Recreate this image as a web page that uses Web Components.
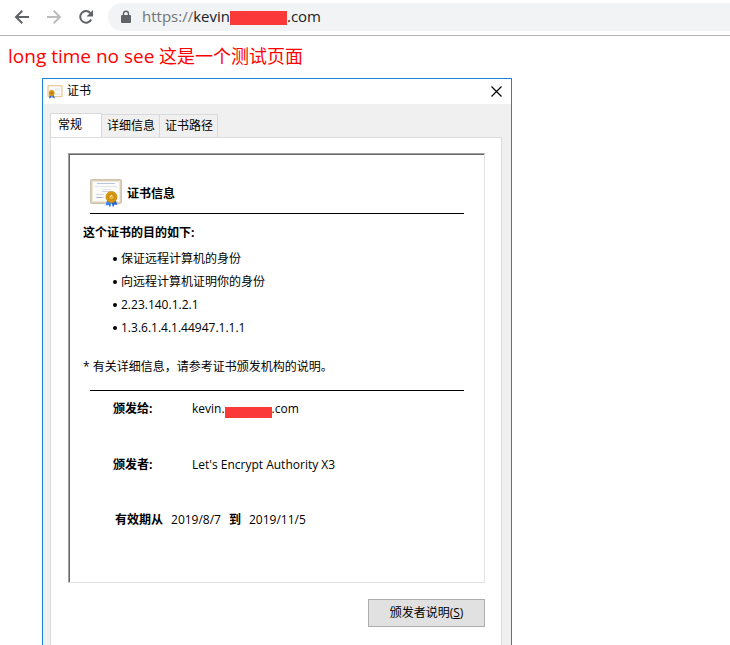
<!DOCTYPE html>
<html lang="zh-CN">
<head>
<meta charset="utf-8">
<title>long time no see</title>
<style>
html, body { margin: 0; height: 100%; background: #fff; }
body { font: 12px/20px "Open Sans", "Noto Sans CJK SC", sans-serif; color: #000; overflow: hidden; }
</style>
</head>
<body>
<browser-page>
  <browser-toolbar slot="toolbar"><span slot="scheme">https://</span><span slot="host">kevin</span><span slot="tld">.com</span></browser-toolbar>
  <page-message><span slot="latin">long time no see</span> 这是一个测试页面</page-message>
  <cert-dialog>
    <span slot="title">证书</span>
    <cert-tabs slot="tabs"></cert-tabs>
    <cert-summary></cert-summary>
    <cert-button slot="action">颁发者说明(<u>S</u>)</cert-button>
  </cert-dialog>
</browser-page>

<script>
function define(name, html) {
  const template = document.createElement('template');
  template.innerHTML = html;
  customElements.define(name, class extends HTMLElement {
    constructor() {
      super();
      this.attachShadow({ mode: 'open' }).append(template.content.cloneNode(true));
    }
  });
}

define('browser-page', `
<style>
:host { display: flex; flex-direction: column; height: 100vh; overflow: hidden; }
main { flex: 1; min-height: 0; display: flex; flex-direction: column; padding: 8px 8px 0; }
</style>
<slot name="toolbar"></slot>
<main><slot></slot></main>`);

define('redaction-bar', `
<style>:host { display: inline-block; background: #fb3939; }</style>`);

define('browser-toolbar', `
<style>
:host { display: flex; align-items: center; box-sizing: border-box; height: 36px; padding: 0 0 1px 12px; gap: 12px;
  border-bottom: 1px solid #b4b4b4; background: #fff; }
button { width: 20px; height: 20px; padding: 0; border: 0; background: none; color: #5f6368; }
button:disabled { color: #bdbdbd; }
svg { display: block; width: 20px; height: 20px; fill: none; stroke: currentColor; stroke-width: 2; }
.box { flex: 1; display: flex; align-items: center; height: 28px; border-radius: 14px 0 0 14px; background: #f1f3f4;
  font: 15px/18px "Open Sans", sans-serif; color: #202124; }
.box > svg { width: 12px; height: 14px; margin: 0 10px 0 12px; color: #5f6368; }
.url { display: flex; align-items: center; padding-bottom: 2px; }
.scheme { color: #70757a; }
redaction-bar { width: 57px; height: 14px; margin-top: 4px; }
input { flex: 1; min-width: 0; border: 0; padding: 0; outline: 0; background: none; font: inherit; }
</style>
<button aria-label="Back"><svg viewBox="0 0 20 20"><path d="M17 10H4M10.300 3.700 4 10l6.300 6.300"/></svg></button>
<button aria-label="Forward" disabled><svg viewBox="0 0 20 20"><path d="M3 10h13M9.700 3.700 16 10l-6.300 6.300"/></svg></button>
<button aria-label="Reload"><svg viewBox="0 0 20 20"><path d="M15.200 12.500A5.800 5.800 0 1 1 14.300 6"/><path d="M17 3v6.500h-6.500z" fill="currentColor" stroke="none"/></svg></button>
<label class="box">
  <svg viewBox="0 0 12 14"><rect x="1" y="5" width="10" height="8" rx="1" fill="currentColor" stroke="none"/><path d="M3.500 6V3.800a2.500 2.500 0 0 1 5 0V6" stroke-width="1.400"/></svg>
  <span class="url"><span class="scheme"><slot name="scheme"></slot></span><slot name="host"></slot><redaction-bar></redaction-bar><slot name="tld"></slot></span>
  <input type="text" aria-label="Address">
</label>`);

define('page-message', `
<style>
:host { display: block; height: 26px; font-size: 18px; line-height: 24px; color: #f00; }
::slotted(span) { font-size: 19px; }
</style>
<slot name="latin"></slot><slot></slot>`);

define('cert-icon', `
<style>:host { display: block; flex: none; } svg { display: block; width: 100%; height: 100%; }</style>
<svg viewBox="0 0 32 29" aria-hidden="true">
  <rect x=".5" y=".5" width="31" height="24" rx="1" fill="#d9cfb9" stroke="#cfc4a9"/>
  <rect x="2.500" y="2.500" width="27" height="20" fill="#fbfbfa" stroke="#eee8da"/>
  <path d="M7 4.500h18" stroke="#bcc4d9"/><path d="M5 7.500h22M12 10.500h9" stroke="#e2e5ed"/><path d="M12 12.500h8" stroke="#cdd3e4"/>
  <path d="M6 15.500h8M6 18.500h8" stroke="#d4d8e4"/><path d="M7 18.500h5" stroke="#a5abc4"/>
  <path d="m17.500 20-2 6.500 3-.5 1.500 2.500 2.500-7z" fill="#3b82ee"/><path d="m25 20 2.500 6-3-.5-1.500 3-2-7z" fill="#2462cf"/>
  <circle cx="21.500" cy="18" r="5.500" fill="#d9990f" stroke="#c4860f" stroke-width=".8"/>
  <circle cx="21.500" cy="18" r="3" fill="#eab437" stroke="#b67a0a" stroke-width=".8"/>
  <path d="m20 18 2-2" stroke="#ffe39a"/>
</svg>`);

define('cert-icon-small', `
<style>:host { display: block; flex: none; width: 16px; height: 14px; } svg { display: block; }</style>
<svg width="16" height="14" viewBox="0 0 16 14" aria-hidden="true">
  <rect x="1" y=".7" width="14" height="11" rx=".5" fill="#fcfaf6" stroke="#e9cb9d" stroke-width="1.300"/>
  <path d="M8 3h5v3H8zM8 8h5v2H8z" fill="#eceef3"/><path d="M3 4.500h3" stroke="#e6e8ee"/>
  <path d="m3 8-1 5.500 2.500-1 .5-3zM6 8l2 5.500-2.500-1L5 9z" fill="#2f6fdf"/>
  <circle cx="4.700" cy="8" r="2.900" fill="#d99a10"/><circle cx="4.700" cy="8" r="1.200" fill="#b37a08"/>
</svg>`);

define('cert-dialog', `
<style>
:host { flex: 1; display: flex; flex-direction: column; box-sizing: border-box; width: 66%; min-width: 420px; max-width: 470px;
  margin: 8px 34px 0; border: 1px solid #1883d7; border-bottom: 0; background: #f0f0f0; }
header { flex: none; display: flex; align-items: center; gap: 4px; height: 25px; padding: 0 9px 0 4px; background: #fff; }
.title { padding-bottom: 2px; }
header button { margin-left: auto; width: 11px; height: 11px; padding: 0; border: 0; background: none; }
header svg { display: block; stroke: #000; stroke-width: 1.200; }
.body { flex: 1; display: flex; flex-direction: column; padding: 9px 9px 0 7px; }
.panel { flex: 1; padding: 15px 16px 16px 17px; border: 1px solid #dcdcdc; border-bottom: 0; background: #fff; }
.actions { display: flex; justify-content: flex-end; padding-top: 16px; }
</style>
<header><cert-icon-small></cert-icon-small><span class="title"><slot name="title"></slot></span>
  <button aria-label="关闭"><svg width="11" height="11" viewBox="0 0 11 11"><path d="m.5.5 10 10m0-10-10 10"/></svg></button></header>
<div class="body">
  <slot name="tabs"></slot>
  <div class="panel"><slot></slot><div class="actions"><slot name="action"></slot></div></div>
</div>`);

define('cert-tabs', `
<style>
:host { display: block; margin-bottom: -1px; }
div { display: flex; align-items: flex-end; }
button { box-sizing: border-box; height: 24px; margin: 0 0 0 -1px; padding: 0 4px 0 5px; border: 1px solid #d9d9d9; background: #f0f0f0; font: inherit; color: #000; }
button[aria-selected=true] { height: 25px; margin: 0; padding: 0 19px 3px 7px; border-bottom: 0; background: #fff; }
</style>
<div role="tablist"><button role="tab" aria-selected="true">常规</button><button role="tab" aria-selected="false">详细信息</button><button role="tab" aria-selected="false">证书路径</button></div>`);

define('cert-summary', `
<style>
:host { display: block; box-sizing: border-box; padding: 24px 20px 52px 14px; border: 1px solid; border-color: #a0a0a0 #e3e3e3 #e3e3e3 #a0a0a0;
  box-shadow: inset 1px 1px #696969; background: #fff; }
header { display: flex; align-items: center; gap: 5px; height: 31px; padding-left: 7px; font-weight: 700; }
cert-icon { width: 32px; height: 29px; }
hr { height: 1px; margin: 4px 0 9px 7px; border: 0; background: #000; }
h2 { margin: 0 0 4px; font-size: 12px; line-height: 20px; }
ul { margin: 0 0 18px; padding: 0 0 0 30px; list-style: none; line-height: 23px; }
li { display: flex; align-items: center; gap: 4px; }
li::before { content: ""; width: 4px; height: 4px; border-radius: 50%; background: #000; }
p { margin: 0; }
p + hr { margin: 13px 0 8px 7px; }
dl { display: grid; grid-template-columns: 79px 1fr; row-gap: 36px; margin: 0; padding-left: 30px; }
dt, b { font-weight: 700; }
dd { margin: 0; }
redaction-bar { width: 47px; height: 11px; vertical-align: -5px; }
.valid { display: flex; gap: 8px; margin-top: 35px; padding-left: 32px; }
</style>
<header><cert-icon></cert-icon><span>证书信息</span></header>
<hr>
<h2>这个证书的目的如下:</h2>
<ul><li>保证远程计算机的身份</li><li>向远程计算机证明你的身份</li><li>2.23.140.1.2.1</li><li>1.3.6.1.4.1.44947.1.1.1</li></ul>
<p>* 有关详细信息，请参考证书颁发机构的说明。</p>
<hr>
<dl><dt>颁发给:</dt><dd>kevin.<redaction-bar></redaction-bar>.com</dd><dt>颁发者:</dt><dd>Let's Encrypt Authority X3</dd></dl>
<div class="valid"><b>有效期从</b><span>2019/8/7</span><b>到</b><span>2019/11/5</span></div>`);

define('cert-button', `
<style>
:host { display: block; }
button { min-width: 117px; height: 28px; padding: 0 8px; border: 1px solid #adadad; background: #e1e1e1; font: inherit; color: #000; }
</style>
<button><slot></slot></button>`);
</script>
</body>
</html>
